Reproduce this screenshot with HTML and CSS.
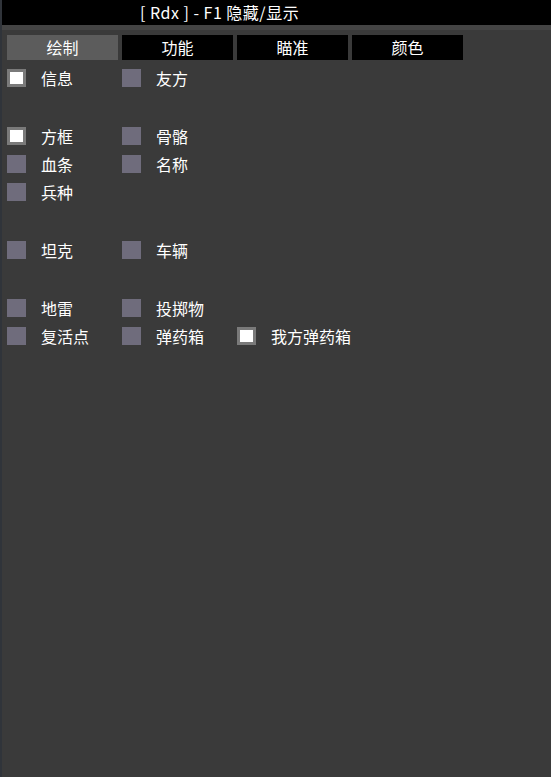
FILE: index.html
```html
<!DOCTYPE html>
<html lang="zh">
<head>
<meta charset="utf-8">
<link rel="stylesheet" href="styles.css">
</head>
<body>
<div class="window">
  <div class="titlebar">[ Rdx ] - F1 隐藏/显示</div>
  <div class="strip"></div>
  <div class="content">
    <div class="tabs">
      <div class="tab active">绘制</div>
      <div class="tab">功能</div>
      <div class="tab">瞄准</div>
      <div class="tab">颜色</div>
    </div>
    <div class="rows">
      <div class="row">
        <label class="item"><span class="box checked"></span><span class="label">信息</span></label>
        <label class="item"><span class="box"></span><span class="label">友方</span></label>
      </div>
      <div class="row"></div>
      <div class="row">
        <label class="item"><span class="box checked"></span><span class="label">方框</span></label>
        <label class="item"><span class="box"></span><span class="label">骨骼</span></label>
      </div>
      <div class="row">
        <label class="item"><span class="box"></span><span class="label">血条</span></label>
        <label class="item"><span class="box"></span><span class="label">名称</span></label>
      </div>
      <div class="row">
        <label class="item"><span class="box"></span><span class="label">兵种</span></label>
      </div>
      <div class="row"></div>
      <div class="row">
        <label class="item"><span class="box"></span><span class="label">坦克</span></label>
        <label class="item"><span class="box"></span><span class="label">车辆</span></label>
      </div>
      <div class="row"></div>
      <div class="row">
        <label class="item"><span class="box"></span><span class="label">地雷</span></label>
        <label class="item"><span class="box"></span><span class="label">投掷物</span></label>
      </div>
      <div class="row">
        <label class="item"><span class="box"></span><span class="label">复活点</span></label>
        <label class="item"><span class="box"></span><span class="label">弹药箱</span></label>
        <label class="item"><span class="box checked"></span><span class="label">我方弹药箱</span></label>
      </div>
    </div>
  </div>
</div>
</body>
</html>
```
FILE: styles.css
```css
html, body {
  margin: 0;
  padding: 0;
  height: 100%;
  background: #3a3a3a;
}
body {
  font-family: "Noto Sans CJK SC", "Noto Sans", sans-serif;
  color: #ffffff;
}
.window {
  height: 100%;
  background: #3a3a3a;
  border-left: 2px solid #30343a;
  box-sizing: border-box;
}
.titlebar {
  height: 25px;
  line-height: 25px;
  background: #000000;
  font-size: 16px;
  letter-spacing: 0.5px;
  padding-left: 138px;
  white-space: nowrap;
}
.strip {
  height: 5px;
  background: #444444;
}
.content {
  padding: 5px 0 0 5px;
}
.tabs {
  display: flex;
  gap: 4px;
}
.tab {
  width: 111px;
  height: 25px;
  line-height: 25px;
  background: #000000;
  text-align: center;
  font-size: 16px;
}
.tab.active {
  background: #5c5c5c;
}
.rows {
  padding-top: 3px;
  display: flex;
  flex-direction: column;
}
.row {
  height: 29px;
  display: flex;
  align-items: center;
}
.row:nth-child(4), .row:nth-child(5), .row:nth-child(10) {
  height: 28px;
}
.item {
  width: 115px;
  display: flex;
  align-items: center;
  flex: none;
}
.box {
  width: 19px;
  height: 18px;
  background: #6f6c7c;
  box-sizing: border-box;
  flex: none;
}
.box.checked {
  background: #ffffff;
  border: 3px solid #7a7a7a;
}
.label {
  margin-left: 15px;
  font-size: 16px;
  line-height: 20px;
  white-space: nowrap;
}
```
